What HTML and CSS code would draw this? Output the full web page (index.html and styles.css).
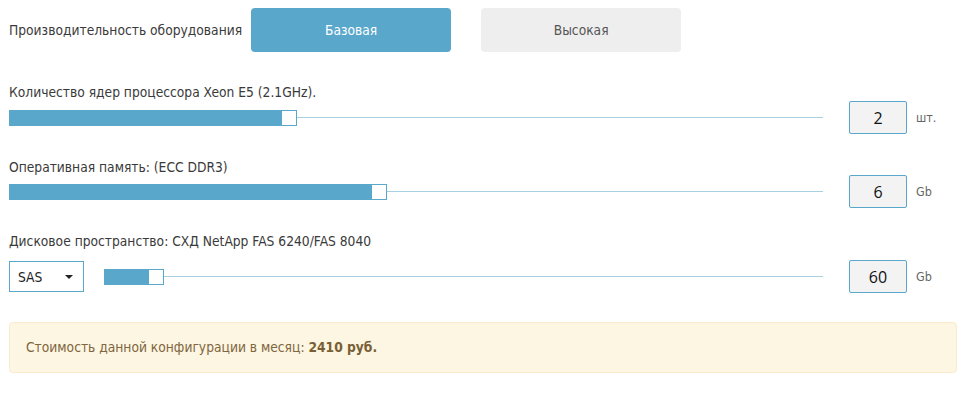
FILE: index.html
```html
<!DOCTYPE html>
<html lang="ru">
<head>
    <meta charset="UTF-8">
    <meta name="viewport" content="width=device-width, initial-scale=1.0">
    <title>Конфигуратор сервера</title>
    <link rel="stylesheet" href="styles.css">
</head>
<body>
    <div class="calc">
        <!-- Performance level -->
        <div class="perf">
            <span class="perf-label">Производительность оборудования</span>
            <button class="perf-btn active" type="button">Базовая</button>
            <button class="perf-btn" type="button">Высокая</button>
        </div>

        <!-- CPU cores -->
        <div class="param param-cpu">
            <div class="param-label">Количество ядер процессора Xeon E5 (2.1GHz).</div>
            <div class="param-row">
                <div class="slider">
                    <div class="slider-fill" style="width: 272px"></div>
                    <div class="slider-handle"></div>
                    <div class="slider-rest"></div>
                </div>
                <input class="param-value" type="text" value="2">
                <span class="param-unit">шт.</span>
            </div>
        </div>

        <!-- Memory -->
        <div class="param param-ram">
            <div class="param-label">Оперативная память: (ECC DDR3)</div>
            <div class="param-row">
                <div class="slider">
                    <div class="slider-fill" style="width: 362px"></div>
                    <div class="slider-handle"></div>
                    <div class="slider-rest"></div>
                </div>
                <input class="param-value" type="text" value="6">
                <span class="param-unit">Gb</span>
            </div>
        </div>

        <!-- Disk -->
        <div class="param param-disk">
            <div class="param-label">Дисковое пространство: СХД NetApp FAS 6240/FAS 8040</div>
            <div class="param-row">
                <div class="disk-type">
                    <span>SAS</span>
                    <span class="caret"></span>
                </div>
                <div class="slider slider-short">
                    <div class="slider-fill" style="width: 44px"></div>
                    <div class="slider-handle"></div>
                    <div class="slider-rest"></div>
                </div>
                <input class="param-value" type="text" value="60">
                <span class="param-unit">Gb</span>
            </div>
        </div>

        <!-- Total -->
        <div class="total">Стоимость данной конфигурации в месяц: <b>2410 руб.</b></div>
    </div>
</body>
</html>
```

FILE: styles.css
```css
body { margin: 0; padding: 8px 9px; font-family: "DejaVu Sans Condensed", "DejaVu Sans", sans-serif; font-size: 13.7px; color: #3a3a3a; background: #ffffff; }
.calc { width: 948px; }

.perf { display: flex; align-items: center; height: 44px; }
.perf-label { margin-right: 9px; }
.perf-btn { width: 200px; height: 44px; margin-right: 30px; border: none; border-radius: 4px; background-color: #eeeeee; color: #555; font-family: inherit; font-size: 13.7px; cursor: pointer; }
.perf-btn.active { background-color: #5aa7cc; color: #ffffff; }

.param-label { line-height: 16px; }
.param-row { display: flex; align-items: center; height: 33px; }
.param-cpu { margin-top: 32px; }
.param-cpu .param-row { margin-top: 1px; }
.param-ram { margin-top: 25px; }
.param-disk { margin-top: 25px; }
.param-disk .param-row { margin-top: 11px; }

.slider { display: flex; align-items: center; width: 814px; height: 16px; }
.slider-short { width: 719px; margin-left: 20px; }
.slider-fill { height: 16px; background-color: #5aa7cc; }
.slider-handle { width: 16px; height: 16px; box-sizing: border-box; border: 1px solid #5aa7cc; background: #ffffff; }
.slider-rest { flex: 1; height: 1px; background-color: #a9d0e1; }

.param-value { box-sizing: border-box; width: 58px; height: 33px; margin-left: 26px; padding: 0; border: 1px solid #5aa7cc; border-radius: 2px; background-color: #f3f3f3; text-align: center; font-family: "Open Sans", sans-serif; font-size: 16px; color: #111; }
.param-unit { margin-left: 9px; font-size: 12.5px; color: #666; }

.disk-type { display: flex; align-items: center; justify-content: space-between; box-sizing: border-box; width: 75px; height: 31px; padding: 0 10px 0 8px; border: 1px solid #5aa7cc; background: #ffffff; color: #222; }
.caret { width: 0; height: 0; border-left: 4px solid transparent; border-right: 4px solid transparent; border-top: 4px solid #222; }

.total { box-sizing: border-box; height: 51px; margin-top: 29px; padding-left: 16px; line-height: 49px; border: 1px solid #faebcc; border-radius: 4px; background-color: #fcf6e2; color: #7f6540; }
.total b { color: #7a5f35; }
```
